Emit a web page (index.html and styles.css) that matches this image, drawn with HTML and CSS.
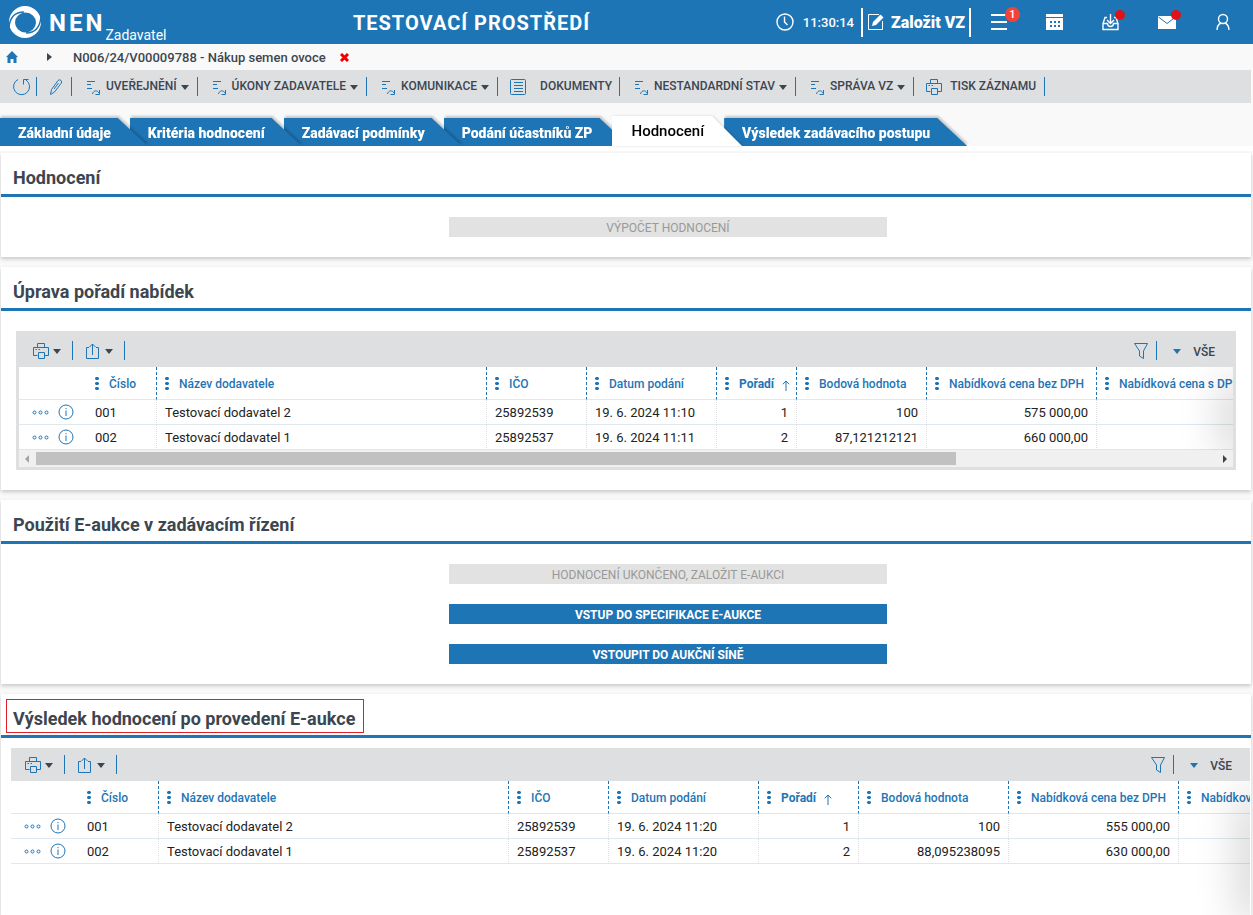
FILE: index.html
```html
<!DOCTYPE html>
<html lang="cs">
<head>
<meta charset="utf-8">
<meta name="viewport" content="width=device-width, initial-scale=1">
<title>NEN - Nákup semen ovoce</title>
<link rel="stylesheet" href="styles.css">
</head>
<body>

<!-- shared icons -->
<svg class="sprite" aria-hidden="true">
  <symbol id="i-process" viewBox="0 0 14 15"><path d="M1 1.500h8M1 4.500h4M1 8.500h5M6.500 14c1-4 5-4 6.500-1M13.500 10v4.500h-4"/></symbol>
  <symbol id="i-print" viewBox="0 0 17 17"><path d="M4.500 4.500v-4h7v4M4.500 12.500h-4v-8h15v8h-4M5.500 9.500h6v6h-6zM2.500 6.500h1.500M5.500 6.500h1.500"/></symbol>
  <symbol id="i-share" viewBox="0 0 15 17"><path d="M4 4.500H1.500v11h12v-11H11M7.500 12V1M4.500 4l3-3 3 3"/></symbol>
  <symbol id="i-filter" viewBox="0 0 15 17"><path d="M.500.500h13L9.500 8v7.500l-4-2.500V8z"/></symbol>
  <symbol id="i-more" viewBox="0 0 17 5"><circle cx="2.500" cy="2.500" r="1.500"/><circle cx="8.500" cy="2.500" r="1.500"/><circle cx="14.500" cy="2.500" r="1.500"/></symbol>
  <symbol id="i-info" viewBox="0 0 16 16"><circle cx="8" cy="8" r="7"/><path d="M8 6.500V12M8 4v1.200"/></symbol>
  <symbol id="i-up" viewBox="0 0 8 11"><path d="M4 11V1M.800 4.300L4 1l3.200 3.300"/></symbol>
</svg>

<header class="header">
  <a class="brand" href="#">
    <svg class="brand-mark" viewBox="0 0 34 34" aria-hidden="true">
      <path fill="#fff" fill-rule="evenodd" d="M17 1a16 16 0 1 1 0 32a16 16 0 1 1 0-32zM17.500 7.500a10.500 10 0 1 0 0 20a10.500 10 0 1 0 0-20z"/>
      <path fill="none" stroke="#1e75b5" stroke-width="1.500" d="M1 22C2 12 7 7 16 7M33 12C32 22 27 28 18 28"/>
    </svg>
    <span class="brand-name">NEN</span>
    <span class="brand-role">Zadavatel</span>
  </a>
  <h1 class="env">TESTOVACÍ PROSTŘEDÍ</h1>
  <div class="tools">
    <div class="clock">
      <svg width="18" height="18" viewBox="0 0 18 18" aria-hidden="true"><circle class="bold" cx="9" cy="9" r="8"/><path class="bold" d="M8.500 3.500V9l3 3"/></svg>
      <time>11:30:14</time>
    </div>
    <button class="create" type="button">
      <svg width="18" height="18" viewBox="0 0 18 18" aria-hidden="true"><path d="M12 1.500H1.500v15h14V8"/><path class="solid" d="M5 13l1-4 7.500-7.500 3 3L9 12z"/></svg>
      Založit VZ
    </button>
    <button class="tool" type="button" aria-label="Menu">
      <svg width="18" height="18" viewBox="0 0 18 18" aria-hidden="true"><path class="thick" d="M1 2h16M1 9h16M1 16h16"/></svg>
      <span class="badge">1</span>
    </button>
    <button class="tool" type="button" aria-label="Kalendář">
      <svg width="18" height="18" viewBox="0 0 18 18" aria-hidden="true"><path class="solid" fill-rule="evenodd" d="M0 1h17v3H0zM0 5h17v12H0zM4 8v2h2V8zM8 8v2h2V8zM12 8v2h2V8zM4 12v2h2v-2zM8 12v2h2v-2zM12 12v2h2v-2z"/></svg>
    </button>
    <button class="tool" type="button" aria-label="Doručené">
      <svg width="18" height="18" viewBox="0 0 18 18" aria-hidden="true"><path class="bold" d="M5 4.500H3l-2 6v6h15v-6l-2-6h-2M1 10.500h4.500c0 4 6 4 6 0H16M8.500 1v9M5 7l3.500 3.500L12 7"/></svg>
      <span class="dot"></span>
    </button>
    <button class="tool" type="button" aria-label="Zprávy">
      <svg width="18" height="18" viewBox="0 0 18 18" aria-hidden="true"><path class="solid" d="M0 3h18v13H0z"/><path class="cut" d="M.500 4L9 10.500 17.500 4"/></svg>
      <span class="dot"></span>
    </button>
    <button class="tool" type="button" aria-label="Uživatel">
      <svg width="18" height="18" viewBox="0 0 18 18" aria-hidden="true"><circle class="bold" cx="9" cy="6" r="4.500"/><path class="bold" d="M3 17c0-4 2-6 4-7M15 17c0-4-2-6-4-7"/></svg>
    </button>
  </div>
</header>

<nav class="crumbs">
  <a class="home" href="#" aria-label="Domů"><svg width="14" height="12" viewBox="0 0 14 12" aria-hidden="true"><path fill="#1e75b5" d="M7 0l6 6h-1.500v6H8.500V8h-3v4h-3V6H1z"/></svg></a>
  <svg class="crumb-arrow" width="5" height="8" viewBox="0 0 5 8" aria-hidden="true"><path d="M0 0l5 4-5 4z"/></svg>
  <a class="crumb" href="#">N006/24/V00009788 - Nákup semen ovoce</a>
  <button class="close" type="button" aria-label="Zavřít"><svg width="9" height="9" viewBox="0 0 9 9" aria-hidden="true"><path d="M1 1l7 7M8 1L1 8"/></svg></button>
</nav>

<div class="toolbar">
  <button class="only-icon" type="button" aria-label="Obnovit"><svg class="icon" width="18" height="18" viewBox="0 0 18 18" aria-hidden="true"><path d="M6 1.500A8 8 0 1 0 14 2M11.500 6.500V1.500h5"/></svg></button>
  <button class="only-icon" type="button" aria-label="Upravit"><svg class="icon" width="14" height="18" viewBox="0 0 14 18" aria-hidden="true"><path d="M1.500 16.500l1-5L9 2.500q1.500-1.500 3 0t0 3L5.500 14zM9.500 5L5 11"/></svg></button>
  <button type="button"><svg class="icon" width="14" height="15"><use href="#i-process"/></svg>UVEŘEJNĚNÍ<i class="caret"></i></button>
  <button type="button"><svg class="icon" width="14" height="15"><use href="#i-process"/></svg>ÚKONY ZADAVATELE<i class="caret"></i></button>
  <button type="button"><svg class="icon" width="14" height="15"><use href="#i-process"/></svg>KOMUNIKACE<i class="caret"></i></button>
  <button class="wide" type="button"><svg class="icon" width="17" height="17" viewBox="0 0 17 17" aria-hidden="true"><rect x=".5" y=".5" width="15" height="15" rx="1"/><path d="M4 3.500h9M4 6.500h9M4 9.500h9M4 12.500h9"/></svg>DOKUMENTY</button>
  <button type="button"><svg class="icon" width="14" height="15"><use href="#i-process"/></svg>NESTANDARDNÍ STAV<i class="caret"></i></button>
  <button type="button"><svg class="icon" width="14" height="15"><use href="#i-process"/></svg>SPRÁVA VZ<i class="caret"></i></button>
  <button class="print" type="button"><svg class="icon" width="17" height="17"><use href="#i-print"/></svg>TISK ZÁZNAMU</button>
</div>

<nav class="tabs">
  <a class="tab" href="#"><span>Základní údaje</span></a>
  <a class="tab" href="#"><span>Kritéria hodnocení</span></a>
  <a class="tab" href="#"><span>Zadávací podmínky</span></a>
  <a class="tab" href="#"><span>Podání účastníků ZP</span></a>
  <a class="tab active" href="#" aria-current="page"><span>Hodnocení</span></a>
  <a class="tab" href="#"><span>Výsledek zadávacího postupu</span></a>
</nav>

<main class="content">
  <section class="card">
    <h2><span>Hodnocení</span></h2>
    <div class="actions">
      <button type="button" disabled>VÝPOČET HODNOCENÍ</button>
    </div>
  </section>

  <section class="card">
    <h2><span>Úprava pořadí nabídek</span></h2>
    <div class="grid framed">
      <div class="grid-bar">
        <button type="button" aria-label="Tisk"><svg class="icon" width="17" height="17"><use href="#i-print"/></svg><i class="caret"></i></button>
        <button class="export" type="button" aria-label="Export"><svg class="icon" width="15" height="17"><use href="#i-share"/></svg><i class="caret"></i></button>
        <button class="filter" type="button" aria-label="Filtr"><svg class="icon" width="15" height="17"><use href="#i-filter"/></svg></button>
        <button class="all" type="button"><i class="caret"></i>VŠE</button>
      </div>
      <div class="grid-view">
        <table class="bids">
          <colgroup><col class="w68"><col class="w70"><col class="w330"><col class="w100"><col class="w130"><col class="w80"><col class="w130"><col class="w170"><col class="w170"></colgroup>
          <thead>
            <tr><td></td><th>Číslo</th><th>Název dodavatele</th><th>IČO</th><th>Datum podání</th><th class="sorted">Pořadí<svg class="icon" width="8" height="11"><use href="#i-up"/></svg></th><th>Bodová hodnota</th><th>Nabídková cena bez DPH</th><th>Nabídková cena s DPH</th></tr>
          </thead>
          <tbody>
            <tr><td class="row-tools"><button type="button" aria-label="Akce"><svg class="icon" width="17" height="5"><use href="#i-more"/></svg></button><button type="button" aria-label="Detail"><svg class="icon" width="16" height="16"><use href="#i-info"/></svg></button></td><td>001</td><td>Testovací dodavatel 2</td><td>25892539</td><td>19. 6. 2024 11:10</td><td class="num">1</td><td class="num">100</td><td class="num">575 000,00</td><td></td></tr>
            <tr><td class="row-tools"><button type="button" aria-label="Akce"><svg class="icon" width="17" height="5"><use href="#i-more"/></svg></button><button type="button" aria-label="Detail"><svg class="icon" width="16" height="16"><use href="#i-info"/></svg></button></td><td>002</td><td>Testovací dodavatel 1</td><td>25892537</td><td>19. 6. 2024 11:11</td><td class="num">2</td><td class="num">87,121212121</td><td class="num">660 000,00</td><td></td></tr>
          </tbody>
        </table>
      </div>
      <div class="scroll">
        <i class="scroll-left"></i>
        <div class="scroll-track"><div class="scroll-thumb"></div></div>
        <i class="scroll-right"></i>
      </div>
    </div>
  </section>

  <section class="card">
    <h2><span>Použití E-aukce v zadávacím řízení</span></h2>
    <div class="actions">
      <button type="button" disabled>HODNOCENÍ UKONČENO, ZALOŽIT E-AUKCI</button>
      <button type="button">VSTUP DO SPECIFIKACE E-AUKCE</button>
      <button type="button">VSTOUPIT DO AUKČNÍ SÍNĚ</button>
    </div>
  </section>

  <section class="card last">
    <h2><span class="marked">Výsledek hodnocení po provedení E-aukce</span></h2>
    <div class="grid">
      <div class="grid-bar">
        <button type="button" aria-label="Tisk"><svg class="icon" width="17" height="17"><use href="#i-print"/></svg><i class="caret"></i></button>
        <button class="export" type="button" aria-label="Export"><svg class="icon" width="15" height="17"><use href="#i-share"/></svg><i class="caret"></i></button>
        <button class="filter" type="button" aria-label="Filtr"><svg class="icon" width="15" height="17"><use href="#i-filter"/></svg></button>
        <button class="all" type="button"><i class="caret"></i>VŠE</button>
      </div>
      <div class="grid-view">
        <table class="bids">
          <colgroup><col class="w68"><col class="w80"><col class="w350"><col class="w100"><col class="w150"><col class="w100"><col class="w150"><col class="w170"><col class="w170"></colgroup>
          <thead>
            <tr><td></td><th>Číslo</th><th>Název dodavatele</th><th>IČO</th><th>Datum podání</th><th class="sorted">Pořadí<svg class="icon" width="8" height="11"><use href="#i-up"/></svg></th><th>Bodová hodnota</th><th>Nabídková cena bez DPH</th><th>Nabídková cena s DPH</th></tr>
          </thead>
          <tbody>
            <tr><td class="row-tools"><button type="button" aria-label="Akce"><svg class="icon" width="17" height="5"><use href="#i-more"/></svg></button><button type="button" aria-label="Detail"><svg class="icon" width="16" height="16"><use href="#i-info"/></svg></button></td><td>001</td><td>Testovací dodavatel 2</td><td>25892539</td><td>19. 6. 2024 11:20</td><td class="num">1</td><td class="num">100</td><td class="num">555 000,00</td><td></td></tr>
            <tr><td class="row-tools"><button type="button" aria-label="Akce"><svg class="icon" width="17" height="5"><use href="#i-more"/></svg></button><button type="button" aria-label="Detail"><svg class="icon" width="16" height="16"><use href="#i-info"/></svg></button></td><td>002</td><td>Testovací dodavatel 1</td><td>25892537</td><td>19. 6. 2024 11:20</td><td class="num">2</td><td class="num">88,095238095</td><td class="num">630 000,00</td><td></td></tr>
          </tbody>
        </table>
      </div>
    </div>
  </section>
</main>

</body>
</html>
```
FILE: styles.css
```css
* {
  box-sizing: border-box;
}

body {
  margin: 0;
  min-height: 100vh;
  display: flex;
  flex-direction: column;
  background: #f9f9f9;
  color: #3c4650;
  font-family: Roboto, "Liberation Sans", sans-serif;
  font-size: 13px;
}

a {
  color: inherit;
  text-decoration: none;
}

button {
  margin: 0;
  padding: 0;
  border: 0;
  background: none;
  color: inherit;
  font: inherit;
  cursor: pointer;
}

svg {
  display: block;
  flex: none;
}

.sprite {
  position: absolute;
  width: 0;
  height: 0;
}

.icon {
  fill: none;
  stroke: #1e75b5;
}

.caret {
  border: 4px solid transparent;
  border-top: 5px solid #3c4650;
  border-bottom: 0;
}

/* header */
.header {
  display: grid;
  grid-template-columns: 353fr 423fr auto;
  align-items: center;
  height: 44px;
  padding-right: 2px;
  background: #1e75b5;
  color: #fff;
}

.brand {
  display: flex;
  align-items: center;
  height: 44px;
  padding-left: 8px;
}

.brand-mark {
  width: 34px;
  height: 34px;
}

.brand-name {
  margin: 2px 0 0 7px;
  font-size: 24px;
  font-weight: 700;
  letter-spacing: 3px;
}

.brand-role {
  align-self: flex-end;
  padding-bottom: 1px;
  font-size: 14px;
  line-height: 16px;
}

.env {
  margin: 0;
  padding-top: 1px;
  font-size: 20px;
  font-weight: 700;
  letter-spacing: 1px;
  white-space: nowrap;
}

.tools {
  display: flex;
  align-items: center;
}

.tools svg {
  fill: none;
  stroke: #fff;
}

.tools .solid {
  fill: #fff;
  stroke: none;
}

.tools .thick {
  stroke-width: 2;
}

.tools .bold {
  stroke-width: 1.4;
}

.tools .cut {
  stroke: #1e75b5;
}

.clock {
  display: flex;
  align-items: center;
  gap: 9px;
  padding-right: 7px;
  font-weight: 500;
}

.create {
  display: flex;
  align-items: center;
  gap: 6px;
  height: 29px;
  padding: 0 4px;
  border: solid #fff;
  border-width: 0 2px;
  font-size: 16px;
  font-weight: 900;
}

.tool {
  position: relative;
  display: flex;
  align-items: center;
  justify-content: center;
  width: 56px;
  height: 44px;
}

.badge {
  position: absolute;
  top: 7px;
  left: 34px;
  width: 15px;
  height: 15px;
  border-radius: 50%;
  background: #f44336;
  font-size: 11px;
  font-weight: 500;
  line-height: 15px;
}

.dot {
  position: absolute;
  top: 10px;
  left: 32px;
  width: 10px;
  height: 10px;
  border-radius: 50%;
  background: #dc1418;
}

/* breadcrumbs */
.crumbs {
  display: flex;
  align-items: center;
  height: 26px;
  padding-left: 5px;
  font-weight: 500;
}

.crumb-arrow {
  margin: 0 21px 0 28px;
  fill: #3c4650;
}

.close {
  margin-left: 14px;
}

.close path {
  stroke: #f00000;
  stroke-width: 3;
}

/* record toolbar */
.toolbar {
  display: flex;
  align-items: center;
  height: 33px;
  margin-right: 2px;
  background: #dedfe1;
  font-size: 12px;
  font-weight: 500;
}

.toolbar button {
  display: flex;
  align-items: center;
  height: 19px;
  padding: 0 8px 2px 14px;
  border-right: 1px solid #1e75b5;
  white-space: nowrap;
}

.toolbar .icon {
  margin: 4px 6px 0 0;
}

.toolbar .caret {
  margin: 3px 0 0 4px;
}

.toolbar .only-icon {
  padding: 0 6px 0 12px;
}

.toolbar .only-icon .icon {
  margin: 1px 0 0;
}

.toolbar .only-icon + .only-icon {
  padding-right: 8px;
}

.toolbar .wide {
  padding-right: 7px;
  padding-left: 12px;
}

.toolbar .wide .icon {
  margin-right: 13px;
}

.toolbar .print {
  padding-left: 12px;
}

.toolbar .print .icon {
  margin-right: 7px;
}

/* tabs */
.tabs {
  display: flex;
  align-items: flex-end;
  height: 43px;
  font-size: 14px;
  font-weight: 900;
}

.tab {
  position: relative;
  margin-right: -18px;
  filter: drop-shadow(1px -2px 1px rgba(0, 0, 0, .2));
  color: #fff;
  white-space: nowrap;
}

.tab:nth-child(1) { z-index: 5; }
.tab:nth-child(2) { z-index: 4; }
.tab:nth-child(3) { z-index: 3; }
.tab:nth-child(4) { z-index: 2; }
.tab:nth-child(6) { z-index: 1; }

.tab span {
  display: block;
  padding: 3px 37px 1px 18px;
  background: #1e75b5;
  line-height: 24px;
  clip-path: polygon(0 0, calc(100% - 30px) 0, 100% 100%, 0 100%);
}

.tab.active {
  z-index: 6;
  color: #000;
  font-size: 15px;
  font-weight: 500;
  filter: drop-shadow(1px 0 1px rgba(0, 0, 0, .15));
}

.tab.active span {
  padding: 2px 38px 2px 20px;
  background: #fff;
  line-height: 26px;
}

/* cards */
.content {
  flex: 1;
  display: flex;
  flex-direction: column;
  gap: 10px;
  padding: 7px 2px 0 1px;
  background: linear-gradient(#fff 5px, #f9f9f9 5px);
}

.card {
  background: #fff;
  box-shadow: 0 2px 4px rgba(0, 0, 0, .2);
}

.card h2 {
  display: flex;
  height: 44px;
  margin: 0;
  padding: 5px 5px 2px;
  border-bottom: 3px solid #1e75b5;
  font-size: 18px;
  font-weight: 700;
  line-height: 27px;
}

.card h2 span {
  padding: 5px 8px 0 6px;
  border: 1px solid transparent;
}

.card h2 .marked {
  border-color: #e02028;
}

.actions {
  display: grid;
  grid-template-columns: 448fr 438fr 364fr;
  row-gap: 20px;
  padding: 20px 0;
}

.actions button {
  grid-column: 2;
  height: 20px;
  padding-top: 2px;
  background: #1e75b5;
  color: #fff;
  font-size: 12px;
  font-weight: 700;
}

.actions button:disabled {
  background: #e2e2e2;
  color: #999;
  font-weight: 400;
}

/* data grids */
.framed {
  margin: 20px 15px;
  border: 3px solid #dedfe1;
}

.last {
  flex: 1;
  display: flex;
  flex-direction: column;
}

.last .grid {
  flex: 1;
  display: flex;
  flex-direction: column;
  margin: 10px 1px 0 10px;
}

.last .grid-view {
  flex: 1;
}

.grid-bar {
  display: flex;
  align-items: center;
  height: 33px;
  padding: 0 18px 0 2px;
  background: #dedfe1;
}

.grid-bar button {
  display: flex;
  align-items: center;
  gap: 3px;
  height: 19px;
  padding: 2px 11px 0 12px;
  border-right: 1px solid #1e75b5;
}

.grid-bar .export {
  gap: 5px;
}

.grid-bar .filter {
  margin-left: auto;
  padding-right: 7px;
}

.grid-bar .all {
  gap: 12px;
  padding: 2px 0 0 16px;
  border: 0;
  font-size: 12px;
  font-weight: 500;
}

.all .caret {
  border-top-color: #1e75b5;
}

.grid-view {
  position: relative;
  overflow: hidden;
  background: #fff;
}

.grid-view::after {
  content: "";
  position: absolute;
  top: 20px;
  right: -12px;
  bottom: 0;
  width: 12px;
  box-shadow: 0 0 44px 6px rgba(0, 0, 0, .25);
}

.bids {
  width: 0;
  min-width: 100%;
  border-spacing: 0;
  table-layout: fixed;
  color: #222;
}

.w68 { width: 68px; }
.w70 { width: 70px; }
.w80 { width: 80px; }
.w100 { width: 100px; }
.w130 { width: 130px; }
.w150 { width: 150px; }
.w170 { width: 170px; }
.w330 { width: 330px; }
.w350 { width: 350px; }

.bids th,
.bids td {
  padding: 0 8px;
  border-bottom: 1px solid #dfe8ec;
  text-align: left;
  white-space: nowrap;
}

.bids th {
  height: 33px;
  border-right: 1px dashed #1e75b5;
  color: #1e75b5;
  font-size: 12px;
  font-weight: 500;
}

.bids th::before {
  content: "";
  display: inline-block;
  width: 4px;
  height: 15px;
  margin-right: 10px;
  background: radial-gradient(circle closest-side, #1e75b5 80%, transparent) 0 0 / 4px 5px;
  vertical-align: -3px;
}

.bids th .icon {
  display: inline-block;
  margin-left: 8px;
  vertical-align: -3px;
}

.bids .sorted {
  font-weight: 700;
}

.bids tbody td {
  height: 25px;
  border-right: 1px dotted #dcdfe1;
}

.bids tbody .row-tools {
  padding: 0 0 0 13px;
  border-right: 0;
}

.row-tools button {
  margin-right: 9px;
  vertical-align: middle;
}

.bids tbody .num {
  text-align: right;
}

.scroll {
  display: flex;
  align-items: center;
  gap: 7px;
  height: 17px;
  padding: 0 6px;
  background: #f0f0f0;
}

.scroll-track {
  flex: 1;
}

.scroll-thumb {
  width: 78%;
  height: 13px;
  background: #c1c1c1;
}

.scroll-left,
.scroll-right {
  border: 4px solid transparent;
}

.scroll-left {
  border-left: 0;
  border-right-color: #a3a3a3;
}

.scroll-right {
  border-right: 0;
  border-left-color: #404040;
}
```
